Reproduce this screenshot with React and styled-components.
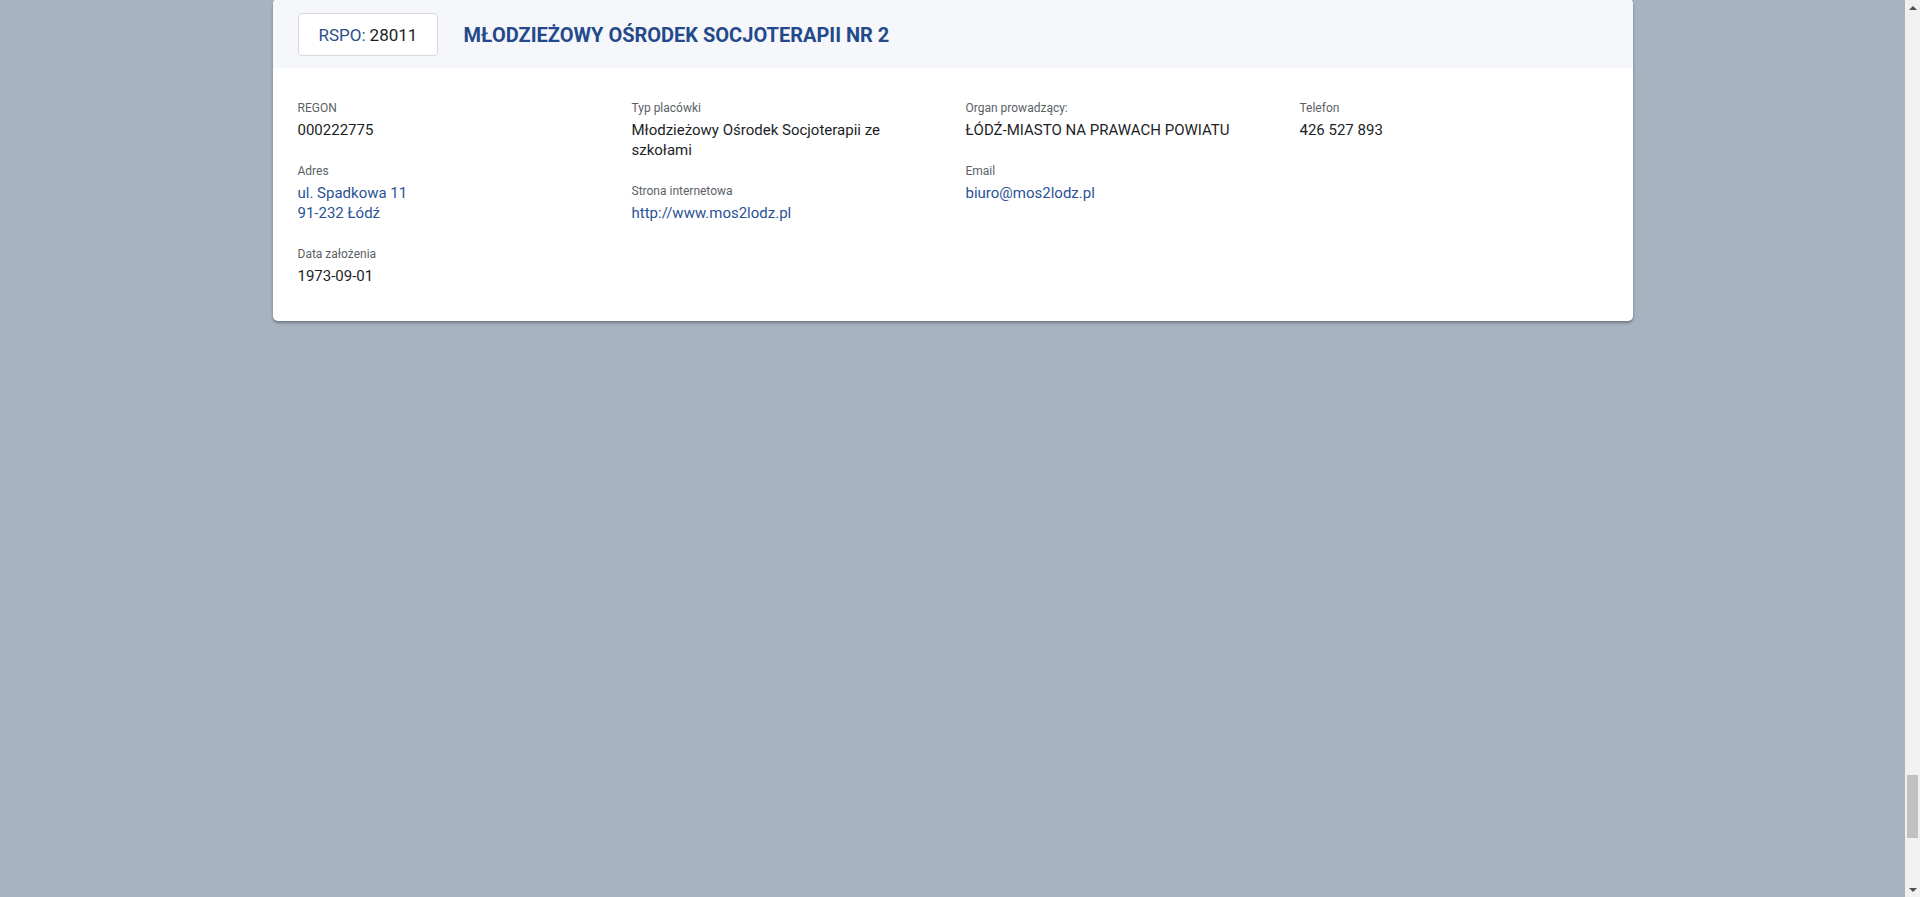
import React from 'react';
import styled, { createGlobalStyle } from 'styled-components';

const GlobalStyle = createGlobalStyle`
  html, body {
    margin: 0;
    padding: 0;
    height: 100%;
    overflow: hidden;
  }
  body {
    font-family: Roboto, 'Liberation Sans', Arial, sans-serif;
    background: #a8b3c1;
  }
`;

const Page = styled.div`
  display: flex;
  height: 100vh;
`;

const Main = styled.main`
  flex: 1;
  background: #a8b3c1;
  display: flex;
  justify-content: center;
  align-items: flex-start;
`;

const Card = styled.section`
  width: 1360px;
  margin-top: -1px;
  background: #ffffff;
  border-radius: 5px;
  box-shadow: 0 2px 3px rgba(40, 50, 70, 0.45);
  overflow: hidden;
`;

const Header = styled.header`
  display: flex;
  align-items: center;
  gap: 25px;
  padding: 14px 25px 12px;
  background: #f5f7fb;
`;

const RspoBox = styled.div`
  height: 43px;
  box-sizing: border-box;
  padding: 0 20px;
  display: flex;
  align-items: center;
  background: #ffffff;
  border: 1px solid #d6d9de;
  border-radius: 4px;
  font-size: 17px;
  color: #1c1e24;
`;

const RspoLabel = styled.span`
  color: #2b4f8a;
  margin-right: 4px;
`;

const Title = styled.h1`
  margin: 0;
  font-size: 20px;
  font-weight: 700;
  color: #24498b;
`;

const Body = styled.div`
  display: grid;
  grid-template-columns: repeat(4, 334px);
  padding: 33px 25px 11px;
`;

const Column = styled.div`
  display: flex;
  flex-direction: column;
  padding-right: 30px;
`;

const Field = styled.div`
  margin-bottom: 24px;
`;

const Label = styled.div`
  font-size: 12px;
  line-height: 15px;
  color: #5c5f66;
  margin-bottom: 4px;
`;

const Value = styled.div`
  font-size: 15px;
  line-height: 20px;
  color: ${p => (p.$link ? '#2b5396' : '#1c1e26')};
`;

const Scrollbar = styled.div`
  width: 15px;
  background: #f1f1f1;
  display: flex;
  flex-direction: column;
`;

const Arrow = styled.div`
  height: 15px;
  display: flex;
  align-items: center;
  justify-content: center;
  &::before {
    content: '';
    border-left: 4px solid transparent;
    border-right: 4px solid transparent;
    ${p =>
      p.$down
        ? 'border-top: 4px solid #505050;'
        : 'border-bottom: 4px solid #505050;'}
  }
`;

const Track = styled.div`
  flex: 1;
  display: flex;
  flex-direction: column;
  justify-content: flex-end;
  align-items: center;
  padding-bottom: 44px;
`;

const Thumb = styled.div`
  width: 11px;
  height: 63px;
  background: #c1c1c1;
`;

const columns = [
  [
    { label: 'REGON', value: ['000222775'] },
    { label: 'Adres', value: ['ul. Spadkowa 11', '91-232 Łódź'], link: true },
    { label: 'Data założenia', value: ['1973-09-01'] }
  ],
  [
    { label: 'Typ placówki', value: ['Młodzieżowy Ośrodek Socjoterapii ze szkołami'] },
    { label: 'Strona internetowa', value: ['http://www.mos2lodz.pl'], link: true }
  ],
  [
    { label: 'Organ prowadzący:', value: ['ŁÓDŹ-MIASTO NA PRAWACH POWIATU'] },
    { label: 'Email', value: ['biuro@mos2lodz.pl'], link: true }
  ],
  [{ label: 'Telefon', value: ['426 527 893'] }]
];

const App = () => (
  <>
    <GlobalStyle />
    <Page>
      <Main>
        <Card>
          <Header>
            <RspoBox>
              <RspoLabel>RSPO:</RspoLabel>28011
            </RspoBox>
            <Title>MŁODZIEŻOWY OŚRODEK SOCJOTERAPII NR 2</Title>
          </Header>
          <Body>
            {columns.map((col, i) => (
              <Column key={i}>
                {col.map(f => (
                  <Field key={f.label}>
                    <Label>{f.label}</Label>
                    {f.value.map(v => (
                      <Value key={v} $link={f.link}>
                        {v}
                      </Value>
                    ))}
                  </Field>
                ))}
              </Column>
            ))}
          </Body>
        </Card>
      </Main>
      <Scrollbar>
        <Arrow />
        <Track>
          <Thumb />
        </Track>
        <Arrow $down />
      </Scrollbar>
    </Page>
  </>
);

export default App;
